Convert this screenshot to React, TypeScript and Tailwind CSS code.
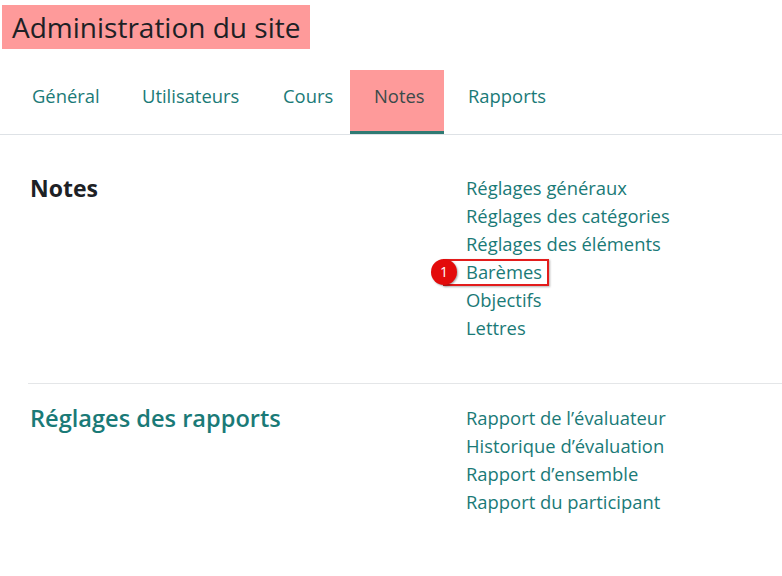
import React from "react";

const tabs = [
  { label: "Général", w: "w-[110px]" },
  { label: "Utilisateurs", w: "w-[141px]" },
  { label: "Cours", w: "w-[91px]" },
  { label: "Notes", w: "w-[94px]", active: true },
  { label: "Rapports", w: "w-[120px]" },
];

const gradeLinks = [
  "Réglages généraux",
  "Réglages des catégories",
  "Réglages des éléments",
  "Barèmes",
  "Objectifs",
  "Lettres",
];

const reportLinks = [
  "Rapport de l’évaluateur",
  "Historique d’évaluation",
  "Rapport d’ensemble",
  "Rapport du participant",
];

function LinkItem({ label, marked }: { label: string; marked?: boolean }) {
  return (
    <div className="h-[28px] leading-[28px]">
      <span className="relative inline-block">
        {marked && (
          <>
            <span className="absolute left-[-23px] top-[1px] h-[27px] w-[106px] border-2 border-[#e31c1c] shadow-[1px_1px_2px_rgba(0,0,0,0.3)]" />
            <span className="absolute left-[-35px] top-[1px] flex h-[26px] w-[26px] items-center justify-center rounded-full bg-[#e30b0b] text-[14px] leading-none text-white shadow-[1px_1px_2px_rgba(0,0,0,0.35)]">
              1
            </span>
          </>
        )}
        <a className="relative text-[#1a7a77]">{label}</a>
      </span>
    </div>
  );
}

export default function App() {
  return (
    <div
      className="relative h-[576px] w-[782px] overflow-hidden bg-white text-[#1d2125]"
      style={{ fontFamily: '"Open Sans", "Noto Sans", sans-serif' }}
    >
      {/* Page title */}
      <div className="pl-[2px] pt-[5px]">
        <h1 className="inline-block h-[44px] bg-[#fe9a9a] px-[10px] text-[28px] leading-[44px] text-[#1d2125]">
          Administration du site
        </h1>
      </div>

      {/* Tab bar */}
      <nav className="mt-[21px] flex h-[65px] border-b border-[#dee2e6] pl-[8px] text-[18.4px]">
        {tabs.map((t) => (
          <div
            key={t.label}
            className={
              t.active
                ? `${t.w} h-[64px] border-b-[3px] border-[#2f7a73] bg-[#fe9a9a] pl-[24px] pt-[12px] leading-[27px] text-[#3b4a4a]`
                : `${t.w} h-[64px] pl-[24px] pt-[12px] leading-[27px] text-[#1a7a77]`
            }
          >
            {t.label}
          </div>
        ))}
      </nav>

      {/* Grades section */}
      <section className="ml-[30px] flex pb-[41px] pt-[39px] text-[18.4px]">
        <h2 className="w-[436px] text-[23px] font-bold leading-[28px] text-[#1d2125]">Notes</h2>
        <div>
          {gradeLinks.map((l) => (
            <LinkItem key={l} label={l} marked={l === "Barèmes"} />
          ))}
        </div>
      </section>

      <div className="ml-[28px] border-t border-[#e4e6e8]" />

      {/* Report settings section */}
      <section className="ml-[30px] flex pt-[20px] text-[18.4px]">
        <h2 className="w-[436px] text-[23.6px] font-semibold leading-[28px] text-[#1a7a77]">
          Réglages des rapports
        </h2>
        <div>
          {reportLinks.map((l) => (
            <LinkItem key={l} label={l} />
          ))}
        </div>
      </section>
    </div>
  );
}
